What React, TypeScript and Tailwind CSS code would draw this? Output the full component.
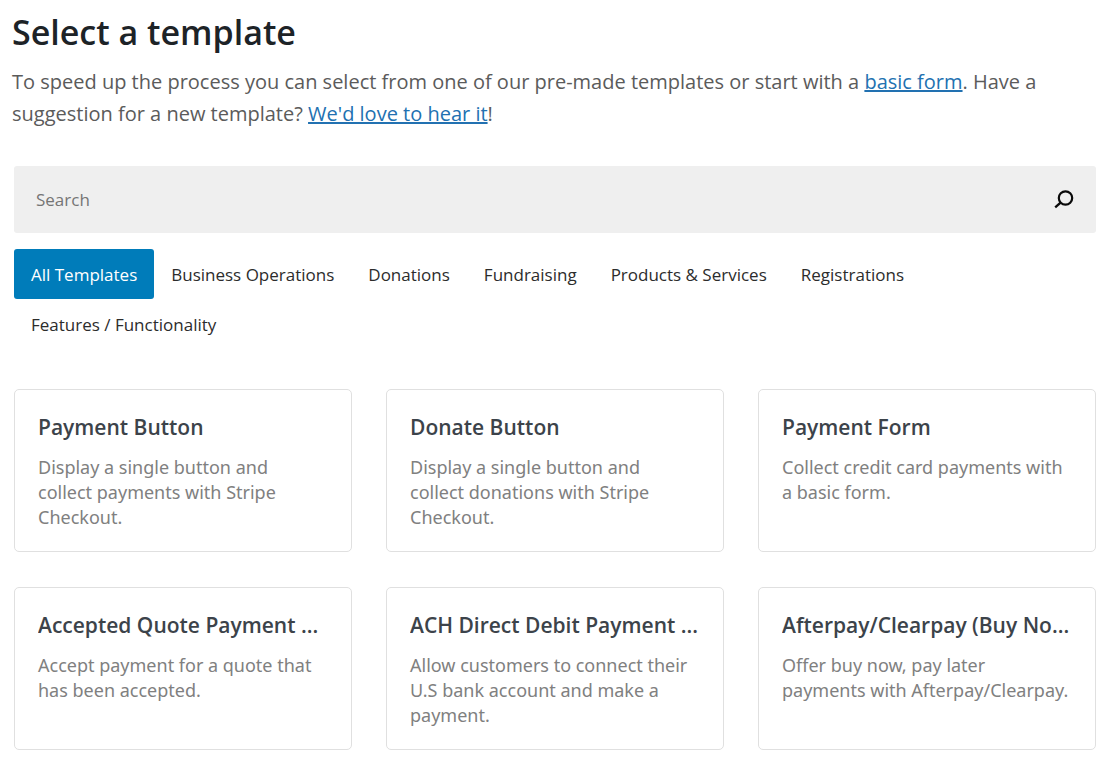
import { useState } from "react";

const categories = [
  "All Templates",
  "Business Operations",
  "Donations",
  "Fundraising",
  "Products & Services",
  "Registrations",
  "Features / Functionality",
];

const templates = [
  {
    title: "Payment Button",
    description: "Display a single button and collect payments with Stripe Checkout.",
  },
  {
    title: "Donate Button",
    description: "Display a single button and collect donations with Stripe Checkout.",
  },
  {
    title: "Payment Form",
    description: "Collect credit card payments with a basic form.",
  },
  {
    title: "Accepted Quote Payment ...",
    description: "Accept payment for a quote that has been accepted.",
  },
  {
    title: "ACH Direct Debit Payment ...",
    description: "Allow customers to connect their U.S bank account and make a payment.",
  },
  {
    title: "Afterpay/Clearpay (Buy No...",
    description: "Offer buy now, pay later payments with Afterpay/Clearpay.",
  },
];

const SearchIcon = () => (
  <svg width="20" height="20" viewBox="0 0 20 20" fill="none" stroke="#0a0a0a" aria-hidden="true">
    <circle cx="11.5" cy="8" r="6.7" strokeWidth="2.2" />
    <path d="M6.6 12.7 1.2 17.3" strokeWidth="2.4" />
  </svg>
);

const App = () => {
  const [active, setActive] = useState("All Templates");
  const [search, setSearch] = useState("");

  return (
    <div className="bg-white pt-2 pb-2 font-['Open_Sans','Noto_Sans',sans-serif]">
      <header className="px-3">
        <h1 className="text-[34px] leading-[48px] font-semibold text-[#1d2327]">
          Select a template
        </h1>
        <p className="mt-2.5 text-[20px] leading-8 text-[#5b5b5b]">
          To speed up the process you can select from one of our pre-made templates or start with a{" "}
          <a href="#basic" className="text-[#2271b1] underline">
            basic form
          </a>
          . Have a suggestion for a new template?{" "}
          <a href="#suggest" className="text-[#2271b1] underline">
            We'd love to hear it
          </a>
          !
        </p>
      </header>

      <main className="mt-9 pl-3.5 pr-5">
        <form
          className="flex items-center rounded-[3px] bg-[#efefef] pr-[22px]"
          onSubmit={(e) => e.preventDefault()}
        >
          <input
            type="text"
            aria-label="Search templates"
            placeholder="Search"
            value={search}
            onChange={(e) => setSearch(e.target.value)}
            className="h-[67px] min-w-0 grow bg-transparent pl-[22px] text-[17px] text-[#333] outline-none placeholder:text-[#757575]"
          />
          <button type="submit" aria-label="Search">
            <SearchIcon />
          </button>
        </form>

        <nav className="mt-4 flex flex-wrap">
          {categories.map((category) => (
            <button
              key={category}
              type="button"
              onClick={() => setActive(category)}
              className={
                active === category
                  ? "h-[50px] rounded-[3px] bg-[#007cba] px-[17px] pt-0.5 text-[17px] text-white"
                  : "h-[50px] rounded-[3px] px-[17px] pt-0.5 text-[17px] text-[#2c2c2c]"
              }
            >
              {category}
            </button>
          ))}
        </nav>

        <div className="mt-10 grid grid-cols-3 gap-x-[34px] gap-y-[35px]">
          {templates.map((template) => (
            <article
              key={template.title}
              className="min-h-[163px] rounded-[5px] border border-[#e0e0e0] px-[23px] pt-[21px] pb-5"
            >
              <h2 className="truncate text-[21px] leading-8 font-semibold text-[#3c434a]">
                {template.title}
              </h2>
              <p className="mt-3 pr-0.5 font-['Noto_Sans','Open_Sans',sans-serif] text-[18px] leading-[25px] text-[#808080]">
                {template.description}
              </p>
            </article>
          ))}
        </div>
      </main>
    </div>
  );
};

export default App;
